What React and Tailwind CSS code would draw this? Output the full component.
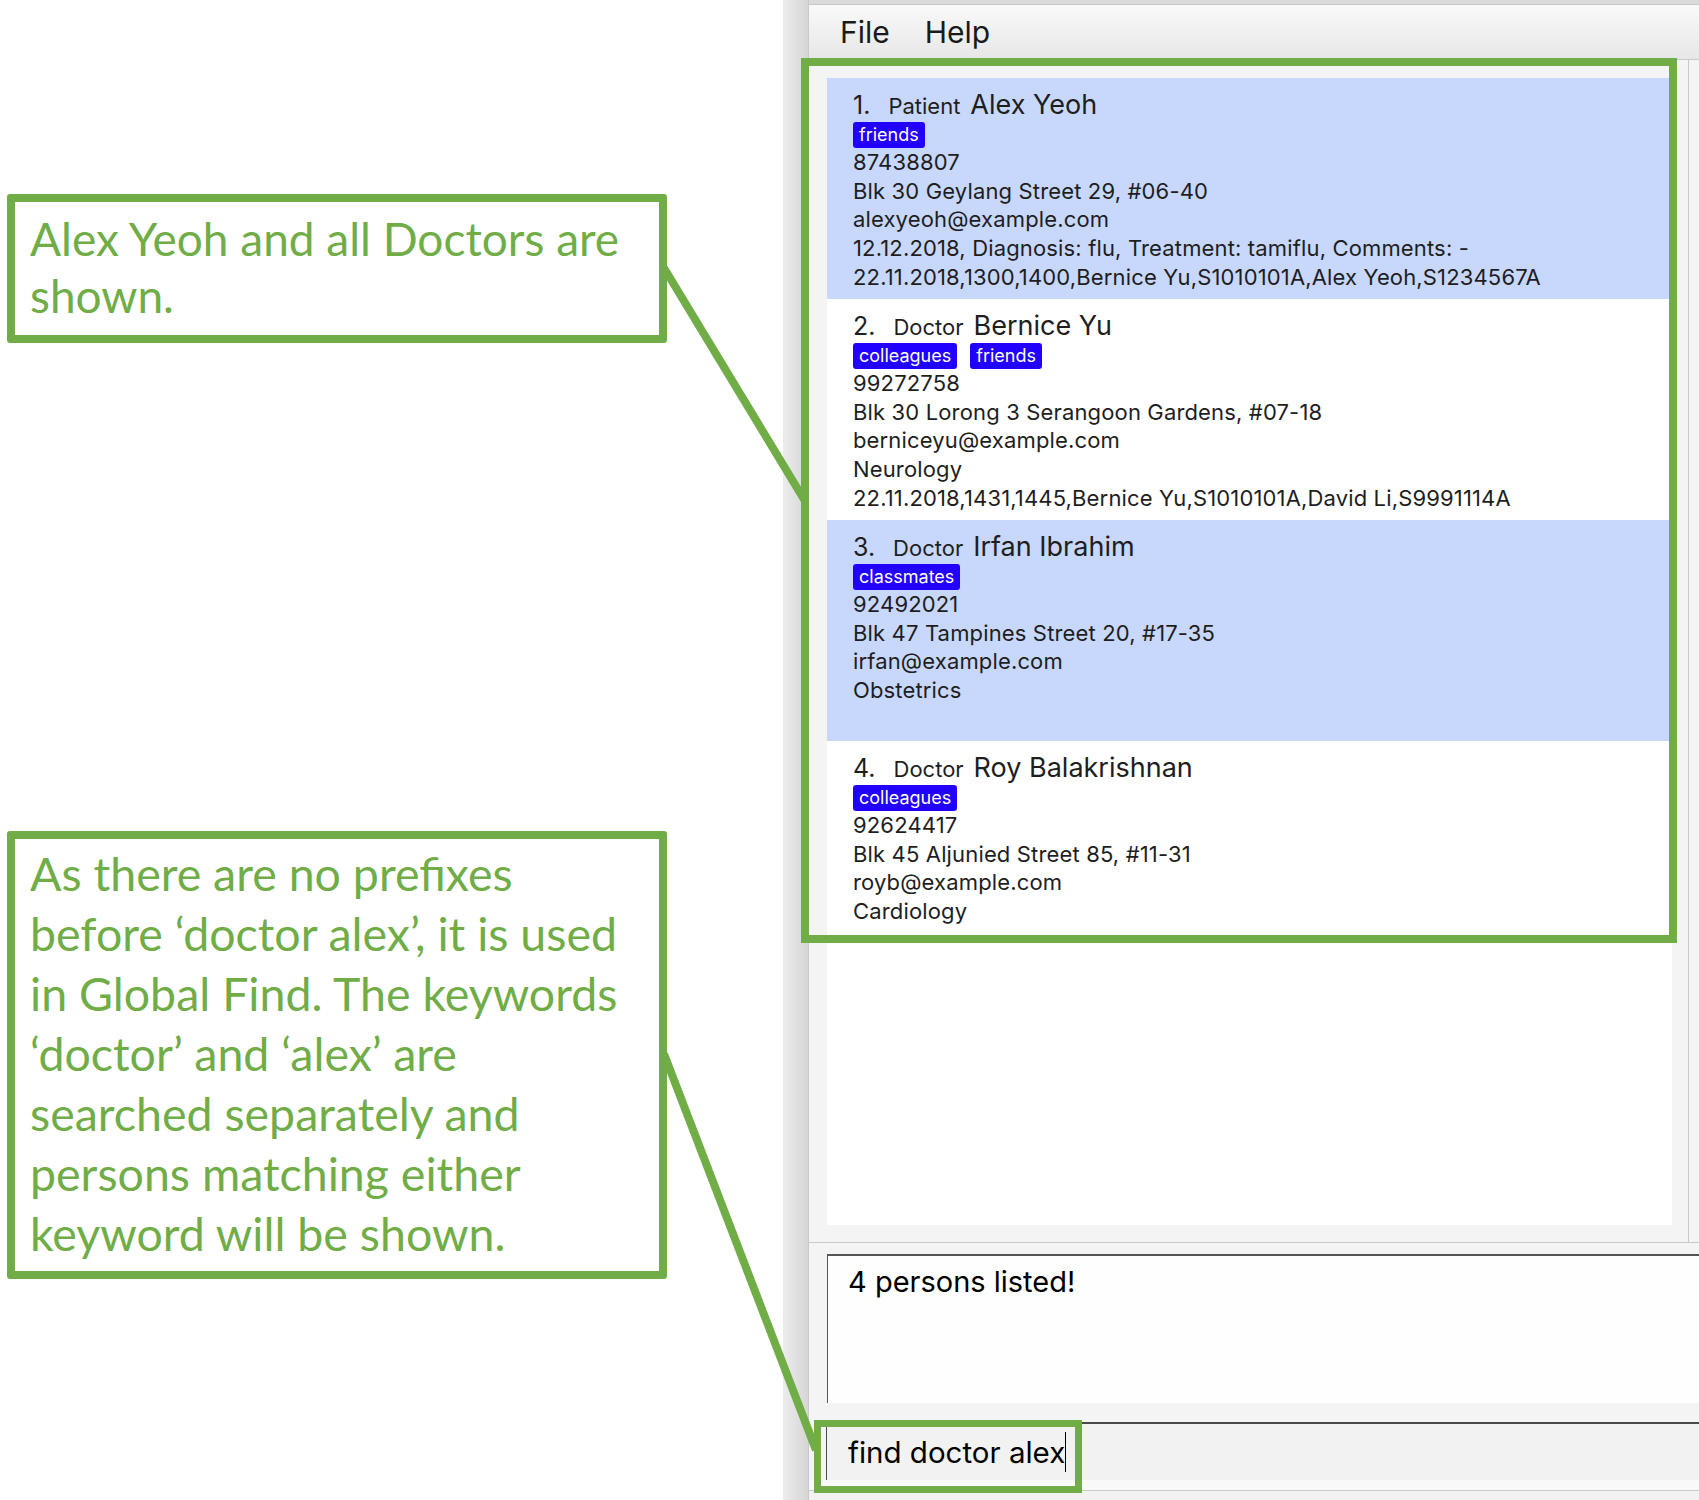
import React from 'react';

const persons = [
  {
    id: 1,
    type: 'Patient',
    name: 'Alex Yeoh',
    tags: ['friends'],
    lines: [
      '87438807',
      'Blk 30 Geylang Street 29, #06-40',
      'alexyeoh@example.com',
      '12.12.2018, Diagnosis: flu, Treatment: tamiflu, Comments: -',
      '22.11.2018,1300,1400,Bernice Yu,S1010101A,Alex Yeoh,S1234567A',
    ],
  },
  {
    id: 2,
    type: 'Doctor',
    name: 'Bernice Yu',
    tags: ['colleagues', 'friends'],
    lines: [
      '99272758',
      'Blk 30 Lorong 3 Serangoon Gardens, #07-18',
      'berniceyu@example.com',
      'Neurology',
      '22.11.2018,1431,1445,Bernice Yu,S1010101A,David Li,S9991114A',
    ],
  },
  {
    id: 3,
    type: 'Doctor',
    name: 'Irfan Ibrahim',
    tags: ['classmates'],
    lines: ['92492021', 'Blk 47 Tampines Street 20, #17-35', 'irfan@example.com', 'Obstetrics'],
  },
  {
    id: 4,
    type: 'Doctor',
    name: 'Roy Balakrishnan',
    tags: ['colleagues'],
    lines: ['92624417', 'Blk 45 Aljunied Street 85, #11-31', 'royb@example.com', 'Cardiology'],
  },
];

const PersonCell = ({ person, shaded }) => (
  <div className={`h-[221px] shrink-0 pl-[26px] pt-[12px] ${shaded ? 'bg-[#c8d7fc]' : 'bg-white'}`}>
    <div className="flex items-baseline h-[30px]">
      <span className="text-[25px] leading-[30px] mr-[18px]">{person.id}.</span>
      <span className="text-[22px] leading-[30px] mr-[10px]">{person.type}</span>
      <span className="text-[27px] leading-[30px]">{person.name}</span>
    </div>
    <div className="flex gap-[13px] h-[26px] mt-[2px]">
      {person.tags.map((tag) => (
        <span
          key={tag}
          className="h-[26px] px-[6px] rounded-[3px] bg-[#2200ff] text-white text-[18px] leading-[26px]"
        >
          {tag}
        </span>
      ))}
    </div>
    <div className="text-[22px] leading-[28.7px] tracking-[0.15px]">
      {person.lines.map((line) => (
        <div key={line}>{line}</div>
      ))}
    </div>
  </div>
);

const Callout = ({ lines, className, lineClass }) => (
  <div className={`w-[660px] border-[8px] border-[#70ad47] rounded-[3px] bg-white pl-[15px] ${className}`}>
    {lines.map((line) => (
      <div key={line} className={`whitespace-nowrap ${lineClass}`}>
        {line}
      </div>
    ))}
  </div>
);

export default function App() {
  return (
    <div className="relative w-[1699px] h-[1500px] flex bg-white overflow-hidden">
      {/* annotations column */}
      <div className="w-[783px] shrink-0 pl-[7px] pt-[194px] font-[Lato,sans-serif] text-[#70ad47]">
        <Callout
          className="h-[149px] pt-[8px] text-[46px]"
          lineClass="leading-[57px]"
          lines={['Alex Yeoh and all Doctors are', 'shown.']}
        />
        <Callout
          className="mt-[488px] h-[448px] pt-[4px] text-[46.5px]"
          lineClass="leading-[60px]"
          lines={[
            'As there are no prefixes',
            'before \u2018doctor alex\u2019, it is used',
            'in Global Find. The keywords',
            '\u2018doctor\u2019 and \u2018alex\u2019 are',
            'searched separately and',
            'persons matching either',
            'keyword will be shown.',
          ]}
        />
      </div>

      {/* app window */}
      <div className="flex flex-1 font-[Inter,sans-serif] text-[#1e1e1e]">
        <div className="w-[26px] shrink-0 bg-gradient-to-r from-[#ececec] to-[#d6d6d6] border-r border-[#c9c9c9]" />
        <div className="flex flex-col flex-1 bg-[#f3f3f3]">
          <div className="h-[5px] bg-[#dadada] border-b border-[#c6c6c6]" />
          <div className="h-[55px] flex items-center gap-[35px] pl-[31px] bg-gradient-to-b from-[#f9f9f9] to-[#e7e7e7] border-b border-[#c9c9c9] text-[30px] text-[#1a1a1a]">
            <span>File</span>
            <span>Help</span>
          </div>

          {/* list pane */}
          <div className="flex h-[1183px] border-b border-[#c9c9c9]">
            <div className="w-[880px] shrink-0 pl-[18px] pt-[18px] pr-[16px] pb-[17px] border-r border-[#c9c9c9] bg-[#f4f4f4]">
              <div className="h-full bg-white flex flex-col overflow-hidden">
                {persons.map((p, i) => (
                  <PersonCell key={p.id} person={p} shaded={i % 2 === 0} />
                ))}
              </div>
            </div>
            <div className="flex-1 bg-[#f4f4f4]" />
          </div>

          {/* result display */}
          <div className="pt-[11px] pl-[18px] bg-[#f4f4f4]">
            <div className="h-[149px] bg-[#fefefe] border-t-2 border-l border-[#555555] pl-[20px] pt-[9px] text-[29px] leading-[34px] text-black">
              4 persons listed!
            </div>
          </div>

          {/* command box */}
          <div className="pt-[19px] pl-[17px] bg-[#f4f4f4]">
            <div className="h-[58px] bg-[#f2f2f2] border-t-2 border-l border-[#4a4a4a] pl-[21px] flex items-center text-[29.5px] text-black">
              <span>find doctor alex</span>
              <span className="w-px h-[40px] bg-black" />
            </div>
          </div>
          <div className="h-[11px] bg-[#f9f9f9] border-b border-[#c9c9c9]" />
          <div className="flex-1 bg-[#f2f2f2]" />
        </div>
      </div>

      {/* highlight boxes */}
      <div className="absolute left-[801px] top-[58px] w-[876px] h-[885px] border-[8px] border-[#70ad47]" />
      <div className="absolute left-[814px] top-[1420px] w-[268px] h-[73px] border-[7px] border-[#70ad47]" />

      {/* connector lines */}
      <svg className="absolute left-0 top-0 pointer-events-none" width="1699" height="1500">
        <line x1="664" y1="268" x2="805" y2="501" stroke="#70ad47" strokeWidth="8" />
        <line x1="664" y1="1054" x2="816" y2="1450" stroke="#70ad47" strokeWidth="8" />
      </svg>
    </div>
  );
}
